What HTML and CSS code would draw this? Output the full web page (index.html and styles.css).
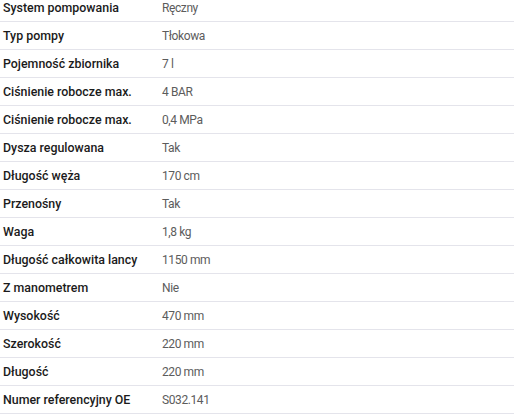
FILE: index.html
```html
<!DOCTYPE html>
<html lang="pl">
<head>
<meta charset="utf-8">
<link rel="stylesheet" href="styles.css">
</head>
<body>
<div class="specs">
  <div class="row"><div class="label">System pompowania</div><div class="value">Ręczny</div></div>
  <div class="row"><div class="label">Typ pompy</div><div class="value">Tłokowa</div></div>
  <div class="row"><div class="label">Pojemność zbiornika</div><div class="value">7 l</div></div>
  <div class="row"><div class="label">Ciśnienie robocze max.</div><div class="value">4 BAR</div></div>
  <div class="row"><div class="label">Ciśnienie robocze max.</div><div class="value">0,4 MPa</div></div>
  <div class="row"><div class="label">Dysza regulowana</div><div class="value">Tak</div></div>
  <div class="row"><div class="label">Długość węża</div><div class="value">170 cm</div></div>
  <div class="row"><div class="label">Przenośny</div><div class="value">Tak</div></div>
  <div class="row"><div class="label">Waga</div><div class="value">1,8 kg</div></div>
  <div class="row"><div class="label">Długość całkowita lancy</div><div class="value">1150 mm</div></div>
  <div class="row"><div class="label">Z manometrem</div><div class="value">Nie</div></div>
  <div class="row"><div class="label">Wysokość</div><div class="value">470 mm</div></div>
  <div class="row"><div class="label">Szerokość</div><div class="value">220 mm</div></div>
  <div class="row"><div class="label">Długość</div><div class="value">220 mm</div></div>
  <div class="row"><div class="label">Numer referencyjny OE</div><div class="value">S032.141</div></div>
</div>
</body>
</html>
```
FILE: styles.css
```css
html, body {
  margin: 0;
  padding: 0;
  background: #ffffff;
}
body {
  font-family: Roboto, "Liberation Sans", sans-serif;
  font-size: 12px;
}
.specs {
  width: 514px;
  margin-top: -6px;
  display: flex;
  flex-direction: column;
}
.row {
  display: grid;
  grid-template-columns: 159px 1fr;
  height: 27px;
  align-items: center;
  border-bottom: 1px solid #e4e4eb;
  padding-left: 3px;
}
.label {
  font-size: 12.4px;
  font-weight: 500;
  color: #1b1b1b;
}
.value {
  font-weight: 400;
  color: #5c5c5c;
  letter-spacing: -0.4px;
}
```
